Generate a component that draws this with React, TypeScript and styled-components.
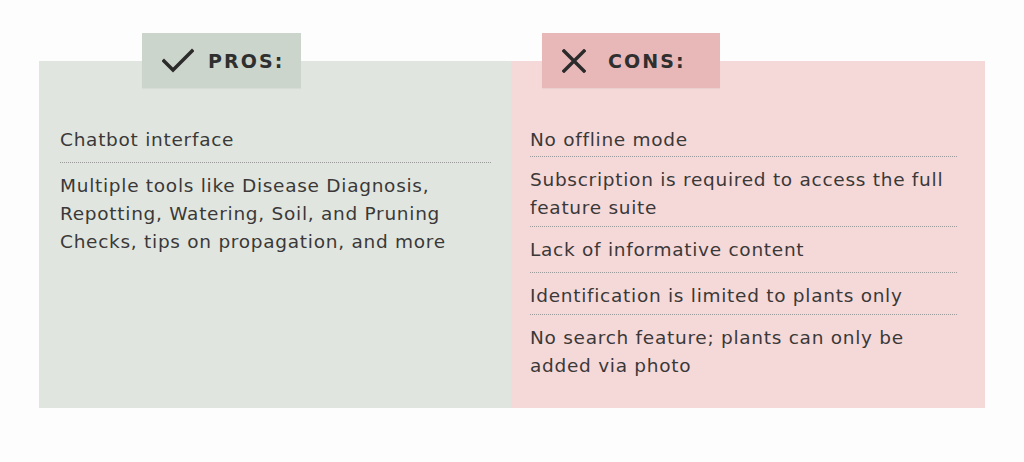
import React from "react";
import styled, { createGlobalStyle } from "styled-components";

const Global = createGlobalStyle`
  html, body { margin: 0; padding: 0; background: #fdfdfd; }
  body { font-family: "DejaVu Sans", "Noto Sans", sans-serif; }
`;

const Page = styled.div`
  display: grid;
  grid-template-columns: 472px 474px;
  align-items: start;
  padding: 33px 0 0 39px;
`;

const Column = styled.div`
  display: flex;
  flex-direction: column;
`;

const Tab = styled.div<{ $bg: string; $offset: number; $width: number; $gap: number }>`
  position: relative;
  z-index: 1;
  align-self: flex-start;
  margin-left: ${(p) => p.$offset}px;
  margin-bottom: -27px;
  width: ${(p) => p.$width}px;
  height: 55px;
  box-sizing: border-box;
  background: ${(p) => p.$bg};
  display: flex;
  align-items: center;
  padding-left: 20px;
  gap: ${(p) => p.$gap}px;
  box-shadow: 0 1px 1px rgba(0, 0, 0, 0.04);
`;

const TabLabel = styled.span`
  font-family: "DejaVu Sans", sans-serif;
  font-weight: 700;
  font-size: 19px;
  letter-spacing: 2.1px;
  color: #2f2f2f;
`;

const Panel = styled.div<{ $bg: string; $pr: number; $pl: number }>`
  height: 347px;
  box-sizing: border-box;
  background: ${(p) => p.$bg};
  padding: 65px ${(p) => p.$pr}px 0 ${(p) => p.$pl}px;
`;

const List = styled.ul`
  list-style: none;
  margin: 0;
  padding: 0;
`;

const Item = styled.li<{ $pb: number; $last?: boolean }>`
  font-size: 18.5px;
  letter-spacing: 0.72px;
  line-height: 28px;
  color: #3b3838;
  padding-top: 9px;
  padding-bottom: ${(p) => p.$pb}px;
  border-bottom: ${(p) => (p.$last ? "none" : "1px dotted #9a9a9a")};
  &:first-child { padding-top: 0; }
`;

const CheckIcon = () => (
  <svg width="32" height="26" viewBox="0 0 32 26" fill="none">
    <polyline points="2,13 11,22 30,3" stroke="#2b2b2b" strokeWidth="3.4" strokeLinecap="square" strokeLinejoin="miter" />
  </svg>
);

const XIcon = () => (
  <svg width="24" height="24" viewBox="0 0 24 24" fill="none">
    <path d="M2 2 L22 22 M22 2 L2 22" stroke="#2b2b2b" strokeWidth="3.4" strokeLinecap="square" />
  </svg>
);

const pros = [
  { text: "Chatbot interface", pb: 8 },
  {
    text: "Multiple tools like Disease Diagnosis, Repotting, Watering, Soil, and Pruning Checks, tips on propagation, and more",
    pb: 8,
  },
];

const cons = [
  { text: "No offline mode", pb: 2 },
  { text: "Subscription is required to access the full feature suite", pb: 4 },
  { text: "Lack of informative content", pb: 8 },
  { text: "Identification is limited to plants only", pb: 4 },
  { text: "No search feature; plants can only be added via photo", pb: 4 },
];

export default function App() {
  return (
    <>
      <Global />
      <Page>
        <Column>
          <Tab $bg="#ccd5cc" $offset={103} $width={159} $gap={14}>
            <CheckIcon />
            <TabLabel>PROS:</TabLabel>
          </Tab>
          <Panel $bg="#e0e6df" $pl={21} $pr={20}>
            <List>
              {pros.map((p, i) => (
                <Item key={i} $pb={p.pb} $last={i === pros.length - 1}>
                  {p.text}
                </Item>
              ))}
            </List>
          </Panel>
        </Column>
        <Column>
          <Tab $bg="#e8b8b8" $offset={31} $width={178} $gap={22}>
            <XIcon />
            <TabLabel>CONS:</TabLabel>
          </Tab>
          <Panel $bg="#f5d9d9" $pl={19} $pr={28}>
            <List>
              {cons.map((p, i) => (
                <Item key={i} $pb={p.pb} $last={i === cons.length - 1}>
                  {p.text}
                </Item>
              ))}
            </List>
          </Panel>
        </Column>
      </Page>
    </>
  );
}
